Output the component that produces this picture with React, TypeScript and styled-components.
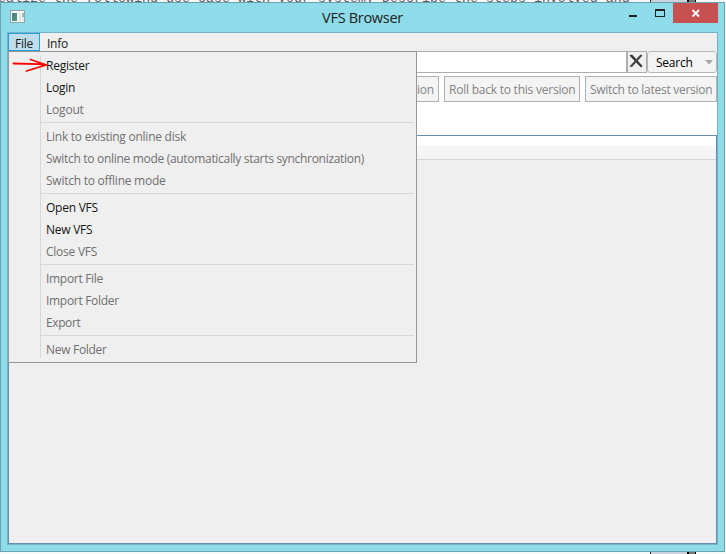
import React from "react";
import styled, { createGlobalStyle, css } from "styled-components";

const Global = createGlobalStyle`
  * { box-sizing: border-box; }
  html, body { margin: 0; padding: 0; overflow: hidden; }
  body { background: #f7f8f8; font-family: "Open Sans", "Noto Sans", sans-serif; font-size: 12px; color: #000; }
`;

const Desktop = styled.div`
  width: 726px;
  height: 554px;
  display: flex;
  flex-direction: column;
  overflow: hidden;
`;

const Behind = styled.div`
  height: 2px;
  display: flex;
  align-items: flex-end;
  overflow: hidden;
  flex: none;
`;

const BehindText = styled.div`
  width: 650px;
  flex: none;
  margin-bottom: -4px;
  margin-left: -2px;
  margin-right: 2px;
  font: 13.33px/14px "Liberation Mono", monospace;
  color: #5c5c66;
  white-space: pre;
`;

const BehindScroll = styled.div`
  width: 37px;
  height: 2px;
  background: #cdd2de;
  border-left: 1px solid #222;
`;

const BehindEdge = styled.div`
  width: 9px;
  height: 2px;
  background: #777;
  border: solid #000;
  border-width: 0 1px 0 2px;
`;

const BehindGap = styled.div`
  width: 650px;
  height: 2px;
  flex: none;
`;

const Window = styled.div`
  width: 725px;
  height: 550px;
  flex: none;
  background: #8edbea;
  border: 1px solid #69a3b2;
  display: flex;
  flex-direction: column;
  padding: 0 6px 6px;
`;

const TitleBar = styled.header`
  height: 29px;
  flex: none;
  display: grid;
  grid-template-columns: 100px 1fr 100px;
`;

const AppIcon = styled.svg`
  margin: 7px 0 0 3px;
`;

const Title = styled.h1`
  margin: 0;
  text-align: center;
  font-size: 14.5px;
  line-height: 29px;
  font-weight: 400;
  color: #222;
  letter-spacing: -0.3px;
`;

const Controls = styled.div`
  display: flex;
  justify-content: flex-end;
  align-items: flex-start;
`;

const Control = styled.button<{ $close?: boolean }>`
  width: ${(p) => (p.$close ? 45 : 27)}px;
  height: 20px;
  padding: 0;
  border: 0;
  display: grid;
  place-items: center;
  background: ${(p) => (p.$close ? "#c75050" : "transparent")};
`;

const Client = styled.main`
  flex: 1;
  border: 1px solid #71b4c5;
  background: #fff;
  display: flex;
  flex-direction: column;
  position: relative;
`;

const MenuBar = styled.nav`
  height: 18px;
  flex: none;
  background: #efefef;
  display: flex;
`;

const MenuTitle = styled.button<{ $open?: boolean }>`
  height: 18px;
  width: ${(p) => (p.$open ? 32 : 35)}px;
  padding: 1px 0 0;
  border: 1px solid ${(p) => (p.$open ? "#26a0da" : "transparent")};
  background: ${(p) => (p.$open ? "#bfddec" : "transparent")};
  font: inherit;
  line-height: 17px;
  letter-spacing: -0.2px;
  color: #212121;
`;

const SearchRow = styled.div`
  height: 22px;
  flex: none;
  display: flex;
`;

const SearchInput = styled.input`
  flex: 1;
  min-width: 0;
  height: 22px;
  border: 1px solid #abadb3;
  background: #fff;
`;

const ClearButton = styled.button`
  width: 20px;
  height: 22px;
  padding: 0 2px 2px 0;
  border: 1px solid #abadb3;
  background: #f0f0f0;
  display: grid;
  place-items: center;
`;

const SearchButton = styled.button`
  width: 70px;
  height: 22px;
  padding: 1px 3px 0 8px;
  border: 1px solid #b4b6b8;
  border-radius: 3px;
  background: #f3f3f3;
  display: flex;
  align-items: center;
  justify-content: space-between;
  font: inherit;
  letter-spacing: -0.25px;
  color: #000;
`;

const VersionRow = styled.div`
  height: 62px;
  flex: none;
  display: flex;
  justify-content: flex-end;
  gap: 5px;
  padding-top: 3px;
`;

const VersionButton = styled.button<{ $w: number; $ls: number }>`
  width: ${(p) => p.$w}px;
  height: 26px;
  padding: 1px 4px 0;
  border: 1px solid #adb2b5;
  background: #f4f4f4;
  color: #838383;
  font: inherit;
  text-align: right;
  white-space: nowrap;
  letter-spacing: ${(p) => p.$ls}px;
`;

const ListView = styled.section`
  flex: 1;
  border: 1px solid #688caf;
  background: #efefef;
`;

const ListHeader = styled.div`
  height: 24px;
  border-bottom: 1px solid #d5d5d5;
  background: linear-gradient(#fff 0 9px, #f7f8fa 9px, #f1f2f4 100%);
`;

const Popup = styled.div`
  position: absolute;
  left: 0;
  top: 18px;
  width: 409px;
  height: 312px;
  border: 1px solid #979797;
  background: #efefef;
  padding: 3px 2px 2px 0;
  display: grid;
  grid-template-columns: 31px 1fr;
`;

const Gutter = styled.div`
  margin: 1px 0 2px;
`;

const Items = styled.div`
  border-left: 1px solid #d7d7d7;
  height: 303px;
`;

const Item = styled.div<{ $off?: boolean; $ls?: number }>`
  height: 22px;
  line-height: 22px;
  padding-left: 5px;
  white-space: nowrap;
  ${(p) => css`
    color: ${p.$off ? "#707070" : "#151515"};
    letter-spacing: ${p.$ls ?? -0.25}px;
  `}
`;

const Separator = styled.hr`
  margin: 1px 0 3px;
  border: 0;
  height: 1px;
  background: #d7d7d7;
`;

const Arrow = styled.svg`
  position: absolute;
  left: 3px;
  top: 24px;
`;

type Entry = { text: string; off?: boolean; ls?: number };

const groups: Entry[][] = [
  [{ text: "Register" }, { text: "Login" }, { text: "Logout", off: true, ls: -0.2 }],
  [
    { text: "Link to existing online disk", off: true },
    { text: "Switch to online mode (automatically starts synchronization)", off: true, ls: -0.305 },
    { text: "Switch to offline mode", off: true },
  ],
  [{ text: "Open VFS" }, { text: "New VFS" }, { text: "Close VFS", off: true }],
  [
    { text: "Import File", off: true, ls: -0.3 },
    { text: "Import Folder", off: true, ls: -0.3 },
    { text: "Export", off: true, ls: -0.4 },
  ],
  [{ text: "New Folder", off: true, ls: -0.3 }],
];

export default function App() {
  return (
    <>
      <Global />
      <Desktop>
        <Behind>
          <BehindText>ealize the following use case with your system. Describe the steps involved and</BehindText>
          <BehindScroll />
          <BehindEdge />
        </Behind>
        <Window>
          <TitleBar>
            <AppIcon width="16" height="14" viewBox="0 0 16 14">
              <defs>
                <linearGradient id="pane" x1="0" y1="0" x2="1" y2="1">
                  <stop offset="0" stopColor="#4a7894" />
                  <stop offset="1" stopColor="#4da06b" />
                </linearGradient>
              </defs>
              <rect x="0.5" y="0.5" width="14" height="12" fill="#f4f6f6" stroke="#8fa3a8" />
              <rect x="2" y="3" width="5" height="8" fill="url(#pane)" />
              <rect x="9" y="3" width="2" height="8" fill="#dfe3e4" />
              <rect x="12" y="3" width="2" height="4" fill="#8dbfae" />
              <rect x="12" y="7" width="2" height="4" fill="#dfe3e4" />
            </AppIcon>
            <Title>VFS Browser</Title>
            <Controls>
              <Control aria-label="Minimize">
                <svg width="27" height="20">
                  <rect x="10" y="12" width="8" height="2" fill="#222" />
                </svg>
              </Control>
              <Control aria-label="Maximize">
                <svg width="27" height="20">
                  <path d="M9 6H19V14H9ZM10 8V13H18V8Z" fill="#222" fillRule="evenodd" />
                </svg>
              </Control>
              <Control $close aria-label="Close">
                <svg width="45" height="20">
                  <path d="M19.5 7L26 13.5M26 7L19.5 13.5" stroke="#fff" strokeWidth="1.8" />
                </svg>
              </Control>
            </Controls>
          </TitleBar>
          <Client>
            <MenuBar>
              <MenuTitle $open>File</MenuTitle>
              <MenuTitle>Info</MenuTitle>
            </MenuBar>
            <SearchRow>
              <SearchInput aria-label="Search text" />
              <ClearButton aria-label="Clear">
                <svg width="16" height="16" viewBox="0 0 16 16">
                  <path d="M1.5 2.5L4 1.5L14.5 13L13 14.5Z" fill="#333" />
                  <path d="M12.5 1.5L14.5 2.5L4 14L1.5 13.5Z" fill="#444" />
                </svg>
              </ClearButton>
              <SearchButton>
                Search
                <svg width="8" height="5">
                  <path d="M0 0H8L4 4.5Z" fill="#a8a8a8" />
                </svg>
              </SearchButton>
            </SearchRow>
            <VersionRow>
              <VersionButton $w={110} $ls={-0.2}>Save version</VersionButton>
              <VersionButton $w={136} $ls={-0.23}>Roll back to this version</VersionButton>
              <VersionButton $w={132} $ls={-0.27}>Switch to latest version</VersionButton>
            </VersionRow>
            <ListView>
              <ListHeader />
            </ListView>
            <Popup>
              <Gutter />
              <Items>
                {groups.map((group, g) => (
                  <React.Fragment key={g}>
                    {g > 0 && <Separator />}
                    {group.map((e) => (
                      <Item key={e.text} $off={e.off} $ls={e.ls}>
                        {e.text}
                      </Item>
                    ))}
                  </React.Fragment>
                ))}
              </Items>
            </Popup>
            <Arrow width="38" height="16" viewBox="0 0 38 16" fill="none" stroke="#f00" strokeWidth="1.8" strokeLinecap="round">
              <path d="M2.5 6.5L28 7.2L35 8M19.5 2.5L35 8L15.5 14" />
            </Arrow>
          </Client>
        </Window>
        <Behind>
          <BehindGap />
          <BehindScroll />
          <BehindEdge />
        </Behind>
      </Desktop>
    </>
  );
}
